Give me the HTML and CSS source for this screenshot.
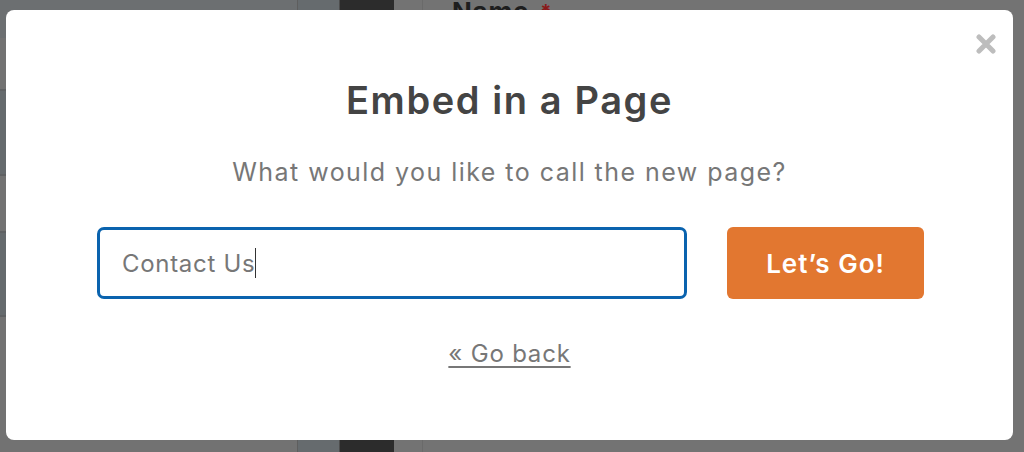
FILE: index.html
```html
<!DOCTYPE html>
<html>
<head>
<meta charset="utf-8">
<link rel="stylesheet" href="styles.css">
</head>
<body>
<div class="backdrop">
  <div class="col col-left">
    <div class="band b-blue b1"></div>
    <div class="band b-gray b2"></div>
    <div class="band b-blue b3"></div>
    <div class="band b-gray b4"></div>
    <div class="band b-blue b5"></div>
    <div class="band b-gray b6"></div>
  </div>
  <div class="col col-side"></div>
  <div class="col col-dark"></div>
  <div class="col col-main">
    <div class="field-label">Name <span class="req">*</span></div>
  </div>
</div>

<div class="modal">
  <button class="close" aria-label="Close">
    <svg width="20" height="20" viewBox="0 0 20 20"><path d="M3 3 L17 17 M17 3 L3 17" stroke="#bdbdbd" stroke-width="5" stroke-linecap="round"/></svg>
  </button>
  <h1 class="title">Embed in a Page</h1>
  <p class="subtitle">What would you like to call the new page?</p>
  <div class="row">
    <div class="input">Contact Us<span class="caret"></span></div>
    <button class="go">Let’s Go!</button>
  </div>
  <a class="back" href="#">« Go back</a>
</div>
</body>
</html>
```

FILE: styles.css
```css
html, body {
  margin: 0;
  padding: 0;
  width: 1024px;
  height: 452px;
  overflow: hidden;
  font-family: "Inter", "Liberation Sans", sans-serif;
}
body {
  position: relative;
  background: #737373;
}
.backdrop {
  display: flex;
  height: 452px;
}
.col { height: 100%; }
.col-left {
  width: 297px;
  display: flex;
  flex-direction: column;
  border-right: 1px solid #5e5e5e;
}
.band { border-bottom: 2px solid #5f6163; }
.b-blue { background: #656a6d; }
.b-gray { background: #727272; }
.b1 { height: 38px; background: #6c6f71; border-bottom: none; }
.b2 { height: 51px; }
.b3 { height: 83px; }
.b4 { height: 55px; }
.b5 { height: 82px; }
.b6 { flex: 1; border-bottom: none; }
.col-side { width: 41px; background: #666b6e; border-right: 1px solid #4d4d4d; }
.col-dark { width: 54px; background: #2c2c2c; }
.col-main {
  flex: 1;
  background: #737373;
  border-left: 1px solid #6a6a6a;
  margin-left: 28px;
}
.field-label {
  margin: -3px 0 0 29px;
  font-size: 26px;
  line-height: 30px;
  font-weight: 700;
  color: #1e1e1e;
  letter-spacing: 0.8px;
}
.req { color: #8a1a1a; font-size: 20px; vertical-align: top; margin-left: 4px; }

.modal {
  position: absolute;
  left: 6px;
  top: 10px;
  width: 1007px;
  height: 430px;
  background: #fff;
  border-radius: 8px;
  display: flex;
  flex-direction: column;
  align-items: center;
  box-sizing: border-box;
  padding-top: 68px;
}
.close {
  position: absolute;
  right: 17px;
  top: 24px;
  width: 20px;
  height: 20px;
  padding: 0;
  border: 0;
  background: none;
}
.close svg { display: block; }
.title {
  margin: 0;
  font-size: 38px;
  line-height: 44px;
  font-weight: 600;
  color: #444;
  letter-spacing: 1.6px;
}
.subtitle {
  margin: 35px 0 0;
  font-size: 25px;
  line-height: 30px;
  color: #777;
  font-weight: 400;
  letter-spacing: 1.45px;
}
.row {
  display: flex;
  gap: 40px;
  margin-top: 40px;
  margin-left: 2px;
}
.input {
  width: 590px;
  height: 72px;
  box-sizing: border-box;
  border: 3px solid #0a63ae;
  border-radius: 7px;
  display: flex;
  align-items: center;
  padding-left: 22px;
  font-size: 24px;
  letter-spacing: 0.7px;
  color: #777;
}
.caret {
  display: inline-block;
  width: 1px;
  height: 30px;
  background: #333;
  margin-left: 0;
}
.go {
  width: 197px;
  height: 72px;
  border: 0;
  border-radius: 6px;
  background: #e27730;
  color: #fff;
  font-family: inherit;
  font-size: 26px;
  font-weight: 600;
  letter-spacing: 1px;
}
.back {
  margin-top: 40px;
  font-size: 24px;
  letter-spacing: 0.8px;
  color: #777;
  text-decoration: underline;
  text-underline-offset: 4px;
  text-decoration-thickness: 1.5px;
}
```
